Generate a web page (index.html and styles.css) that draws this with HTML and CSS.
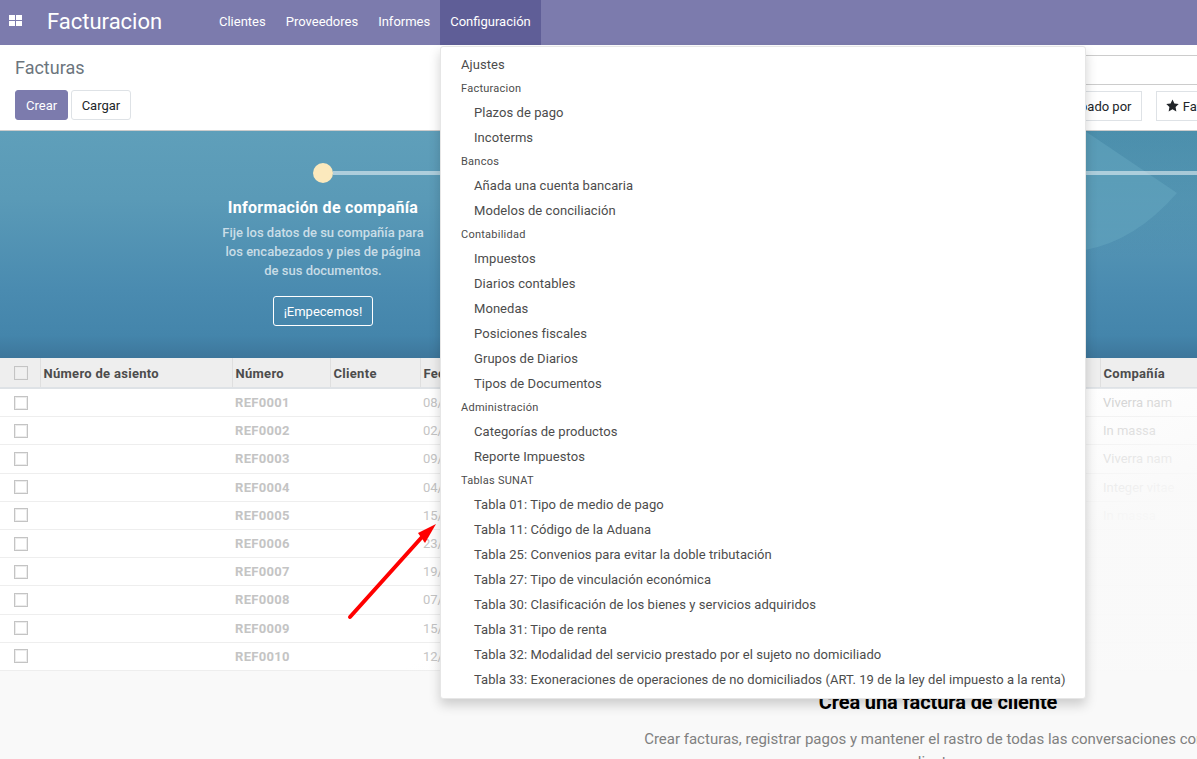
FILE: index.html
```html
<!DOCTYPE html>
<html lang="es">
<head>
    <meta charset="UTF-8">
    <meta name="viewport" content="width=device-width, initial-scale=1.0">
    <title>Facturas - Facturacion</title>
    <link rel="stylesheet" href="styles.css">
</head>
<body>
<div class="app">

    <header class="navbar">
        <a class="apps-icon">
            <svg width="13" height="11" viewBox="0 0 13 11"><path d="M0 0h6v5H0zM7 0h6v5H7zM0 6h6v5H0zM7 6h6v5H7z" fill="#ffffff"/></svg>
        </a>
        <span class="brand">Facturacion</span>
        <nav class="nav-links">
            <a class="nav-link">Clientes</a>
            <a class="nav-link">Proveedores</a>
            <a class="nav-link">Informes</a>
            <a class="nav-link active">Configuración</a>
        </nav>
    </header>

    <section class="control-panel">
        <div class="cp-left">
            <h1 class="page-title">Facturas</h1>
            <div class="cp-buttons">
                <button class="btn btn-primary">Crear</button>
                <button class="btn">Cargar</button>
            </div>
        </div>
        <div class="cp-right">
            <div class="search-box"></div>
            <div class="cp-filters">
                <button class="btn btn-filter">Filtros</button>
                <button class="btn btn-filter">Agrupado por</button>
                <button class="btn btn-filter">
                    <svg class="star" width="13" height="13" viewBox="0 0 24 24"><path d="M12 .8l3.500 7.400 8 1.100-5.800 5.600 1.400 8L12 19l-7.100 3.900 1.400-8L.5 9.300l8-1.100z" fill="#212529"/></svg>
                    Favoritos
                </button>
            </div>
        </div>
    </section>

    <section class="banner">
        <svg class="banner-texture" width="1876" height="227" viewBox="0 0 1876 227">
            <defs>
                <linearGradient id="shade" x1="0" y1="0" x2="0" y2="1">
                    <stop offset="0" stop-color="#1f6a8c" stop-opacity="0.3"/>
                    <stop offset="1" stop-color="#1f6a8c" stop-opacity="0"/>
                </linearGradient>
            </defs>
            <path d="M1085 0h112v125h-112z" fill="url(#shade)"/>
            <path d="M1085 0L1177 62Q1135 110 1085 119z" fill="#64a5c0" opacity="0.55"/>
        </svg>
        <div class="steps">
            <div class="step">
                <div class="step-track">
                    <span class="step-dot"></span>
                </div>
                <h3 class="step-title">Información de compañía</h3>
                <p class="step-text">Fije los datos de su compañía para los encabezados y pies de página de sus documentos.</p>
                <button class="btn-outline">¡Empecemos!</button>
            </div>
        </div>
    </section>

    <section class="list-area">
        <table class="list-table">
            <colgroup>
                <col class="col-check">
                <col class="col-move">
                <col class="col-number">
                <col class="col-client">
                <col class="col-date">
                <col class="col-company">
            </colgroup>
            <thead>
                <tr>
                    <th><span class="check"></span></th>
                    <th>Número de asiento</th>
                    <th>Número</th>
                    <th>Cliente</th>
                    <th>Fecha</th>
                    <th>Compañía</th>
                </tr>
            </thead>
            <tbody>
                <tr><td><span class="check"></span></td><td></td><td class="ref">REF0001</td><td></td><td>08/01/2020</td><td>Viverra nam</td></tr>
                <tr><td><span class="check"></span></td><td></td><td class="ref">REF0002</td><td></td><td>02/06/2020</td><td>In massa</td></tr>
                <tr><td><span class="check"></span></td><td></td><td class="ref">REF0003</td><td></td><td>09/03/2020</td><td>Viverra nam</td></tr>
                <tr><td><span class="check"></span></td><td></td><td class="ref">REF0004</td><td></td><td>04/11/2020</td><td>Integer vitae</td></tr>
                <tr><td><span class="check"></span></td><td></td><td class="ref">REF0005</td><td></td><td>15/02/2020</td><td>In massa</td></tr>
                <tr><td><span class="check"></span></td><td></td><td class="ref">REF0006</td><td></td><td>23/07/2020</td><td></td></tr>
                <tr><td><span class="check"></span></td><td></td><td class="ref">REF0007</td><td></td><td>19/05/2020</td><td></td></tr>
                <tr><td><span class="check"></span></td><td></td><td class="ref">REF0008</td><td></td><td>07/09/2020</td><td></td></tr>
                <tr><td><span class="check"></span></td><td></td><td class="ref">REF0009</td><td></td><td>15/04/2020</td><td></td></tr>
                <tr><td><span class="check"></span></td><td></td><td class="ref">REF0010</td><td></td><td>12/10/2020</td><td></td></tr>
            </tbody>
        </table>
        <div class="list-fade"></div>

        <div class="helper">
            <h2 class="helper-title">Crea una factura de cliente</h2>
            <p class="helper-text">Crear facturas, registrar pagos y mantener el rastro de todas las conversaciones con sus clientes.</p>
        </div>

        <svg class="arrow" width="100" height="105" viewBox="0 0 100 105">
            <path d="M5 95L77 15" stroke="#ff0000" stroke-width="4" stroke-linecap="round" fill="none"/>
            <path d="M91 2L73 11 80 21z" fill="#ff0000"/>
        </svg>
    </section>

    <ul class="dropdown">
        <li class="menu-item">Ajustes</li>
        <li class="menu-header">Facturacion</li>
        <li class="menu-item sub">Plazos de pago</li>
        <li class="menu-item sub">Incoterms</li>
        <li class="menu-header">Bancos</li>
        <li class="menu-item sub">Añada una cuenta bancaria</li>
        <li class="menu-item sub">Modelos de conciliación</li>
        <li class="menu-header">Contabilidad</li>
        <li class="menu-item sub">Impuestos</li>
        <li class="menu-item sub">Diarios contables</li>
        <li class="menu-item sub">Monedas</li>
        <li class="menu-item sub">Posiciones fiscales</li>
        <li class="menu-item sub">Grupos de Diarios</li>
        <li class="menu-item sub">Tipos de Documentos</li>
        <li class="menu-header">Administración</li>
        <li class="menu-item sub">Categorías de productos</li>
        <li class="menu-item sub">Reporte Impuestos</li>
        <li class="menu-header">Tablas SUNAT</li>
        <li class="menu-item sub">Tabla 01: Tipo de medio de pago</li>
        <li class="menu-item sub">Tabla 11: Código de la Aduana</li>
        <li class="menu-item sub">Tabla 25: Convenios para evitar la doble tributación</li>
        <li class="menu-item sub">Tabla 27: Tipo de vinculación económica</li>
        <li class="menu-item sub">Tabla 30: Clasificación de los bienes y servicios adquiridos</li>
        <li class="menu-item sub">Tabla 31: Tipo de renta</li>
        <li class="menu-item sub">Tabla 32: Modalidad del servicio prestado por el sujeto no domiciliado</li>
        <li class="menu-item sub">Tabla 33: Exoneraciones de operaciones de no domiciliados (ART. 19 de la ley del impuesto a la renta)</li>
    </ul>

</div>
</body>
</html>
```

FILE: styles.css
```css
html, body {
    margin: 0;
    height: 100%;
    overflow: hidden;
}
body {
    font-family: Roboto, "Liberation Sans", sans-serif;
    font-size: 13px;
    color: #4c4c4c;
    background-color: #f9f9f9;
}
.app {
    position: relative;
    width: 1876px;
    height: 759px;
    overflow: hidden;
    background-color: #f9f9f9;
}

/* top bar */
.navbar {
    display: flex;
    align-items: stretch;
    height: 45px;
    background-color: #7c7bad;
    color: #ffffff;
}
.apps-icon {
    display: flex;
    align-items: center;
    padding: 0 0 4px 9px;
    width: 47px;
    box-sizing: border-box;
}
.brand {
    font-size: 22px;
    line-height: 44px;
    width: 162px;
}
.nav-links {
    display: flex;
}
.nav-link {
    padding: 0 10px;
    line-height: 43px;
    color: #ffffff;
}
.nav-link.active {
    background-color: #5f5e97;
}

/* control panel */
.control-panel {
    display: grid;
    grid-template-columns: 938px 938px;
    height: 85px;
    background-color: #ffffff;
    border-bottom: 1px solid #cccccc;
}
.cp-left {
    padding-left: 15px;
}
.page-title {
    margin: 0;
    padding-top: 12px;
    font-size: 18px;
    font-weight: 400;
    line-height: 22px;
    color: #6c757d;
}
.cp-buttons {
    display: flex;
    gap: 3px;
    margin-top: 11px;
}
.btn {
    height: 30px;
    padding: 0 9.5px;
    font-family: inherit;
    font-size: 13px;
    color: #212529;
    background-color: #ffffff;
    border: 1px solid #dee2e6;
    border-radius: 3px;
}
.btn-primary {
    padding: 0 10px;
    color: #ffffff;
    background-color: #7c7bad;
    border-color: #7c7bad;
}
.cp-right {
    padding-top: 10px;
}
.search-box {
    height: 28px;
    margin-right: 15px;
    border: 1px solid #cccccc;
    border-right: none;
}
.cp-filters {
    display: flex;
    gap: 14px;
    margin-top: 6px;
    padding-left: 33px;
}
.btn-filter {
    border-radius: 0;
    white-space: nowrap;
}
.star {
    vertical-align: -1px;
}

/* onboarding banner */
.banner {
    position: relative;
    height: 227px;
    overflow: hidden;
    background: linear-gradient(180deg, #5f9fba 0%, #5a9ab7 30%, #4a8bb0 70%, #4485ab 90%, #3d769b 100%);
}
.banner-texture {
    position: absolute;
    top: 0;
    left: 0;
}
.steps {
    position: relative;
    display: flex;
    padding-left: 218px;
}
.step {
    width: 210px;
    text-align: center;
}
.step-track {
    position: relative;
    height: 20px;
    margin: 32px 0 14px;
}
.step-track::after {
    content: "";
    position: absolute;
    top: 8px;
    left: 115px;
    width: 1600px;
    height: 4px;
    background-color: rgba(255, 255, 255, 0.5);
}
.step-dot {
    display: block;
    width: 20px;
    height: 20px;
    margin: 0 auto;
    border-radius: 50%;
    background-color: #fbe9bd;
}
.step-title {
    margin: 0 -10px 4px;
    font-size: 16px;
    font-weight: 700;
    line-height: 22px;
    letter-spacing: 0.3px;
    color: #ffffff;
}
.step-text {
    margin: 0 0 16px;
    line-height: 19px;
    font-weight: 500;
    color: rgba(255, 255, 255, 0.7);
}
.btn-outline {
    height: 30px;
    width: 100px;
    padding: 0;
    font-family: inherit;
    font-size: 13px;
    color: #ffffff;
    background: transparent;
    border: 1px solid #ffffff;
    border-radius: 3px;
}

/* list */
.list-area {
    position: relative;
    height: 401px;
}
.list-table {
    width: 1876px;
    table-layout: fixed;
    border-collapse: collapse;
    background-color: #ffffff;
}
.col-check { width: 40px; }
.col-move { width: 192px; }
.col-number { width: 98px; }
.col-client { width: 90px; }
.col-date { width: 680px; }
.list-table th {
    height: 30px;
    padding: 1px 3px 0;
    box-sizing: border-box;
    text-align: left;
    font-weight: 700;
    color: #4c4c4c;
    letter-spacing: 0.3px;
    background-color: #eeeeee;
    border-left: 1px solid #dfdfdf;
    border-bottom: 2px solid #dee2e6;
}
.list-table th:first-child {
    border-left: none;
}
.list-table td {
    height: 27.2px;
    padding: 0 3px;
    color: #c4c4c4;
    border-bottom: 1px solid #eeeeee;
}
.list-table th:first-child,
.list-table td:first-child {
    padding: 0 0 0 14px;
}
.list-table .ref {
    font-weight: 700;
    letter-spacing: 0.3px;
}
.check {
    display: block;
    width: 12px;
    height: 12px;
    border: 1px solid #c4c4c4;
    background-color: #ffffff;
    box-shadow: inset 0 0 0 1px #ececec;
}
th .check {
    background-color: #f0f0f0;
}
.list-fade {
    position: absolute;
    top: 30px;
    left: 0;
    width: 1876px;
    height: 290px;
    pointer-events: none;
    background: linear-gradient(155.7deg, rgba(249, 249, 249, 0) 40.6%, rgba(249, 249, 249, 0.95) 55.8%);
}
.helper {
    position: absolute;
    top: 331px;
    left: 638px;
    width: 600px;
    text-align: center;
}
.helper-title {
    margin: 0 0 13px;
    font-size: 20px;
    font-weight: 700;
    line-height: 26px;
    letter-spacing: -0.1px;
    color: #000000;
}
.helper-text {
    margin: 0;
    font-size: 15px;
    line-height: 23px;
    color: #808080;
}
.arrow {
    position: absolute;
    left: 345px;
    top: 164px;
}

/* configuration menu */
.dropdown {
    position: absolute;
    top: 46px;
    left: 440px;
    width: 644px;
    margin: 0;
    padding: 5px 0 6px;
    list-style: none;
    background-color: #ffffff;
    border: 1px solid #e6e6e6;
    border-radius: 3px;
    box-shadow: 0 6px 12px rgba(0, 0, 0, 0.18);
}
.menu-item {
    padding-left: 20px;
    line-height: 25px;
    letter-spacing: 0.06px;
    white-space: nowrap;
    color: #4c4c4c;
}
.menu-item.sub {
    padding-left: 33px;
}
.menu-header {
    padding-left: 20px;
    font-size: 11px;
    line-height: 23px;
    letter-spacing: 0.25px;
    color: #4c4c4c;
}
```
